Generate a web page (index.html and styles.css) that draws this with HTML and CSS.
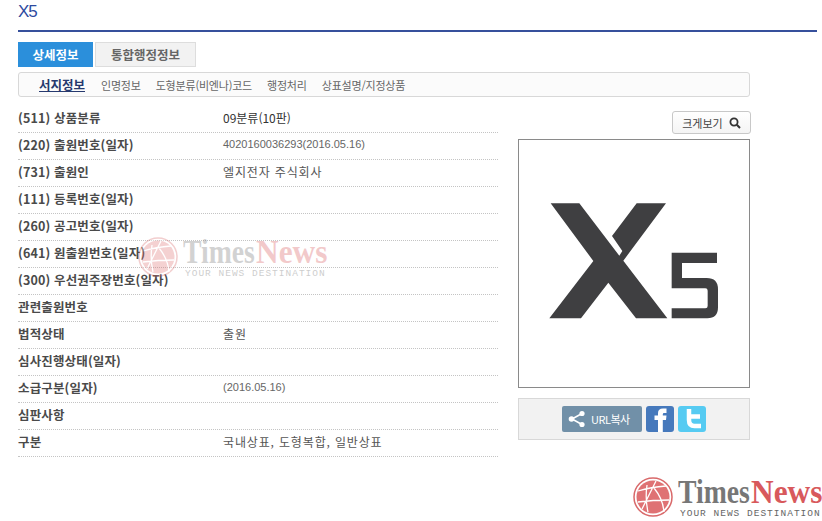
FILE: index.html
```html
<!DOCTYPE html>
<html lang="ko">
<head>
<meta charset="utf-8">
<title>X5</title>
<link rel="stylesheet" href="styles.css">
</head>
<body>
<main class="page">
  <h1 class="title">X5</h1>
  <div class="tabs">
    <a class="tab tab-active">상세정보</a>
    <a class="tab">통합행정정보</a>
  </div>
  <nav class="subnav">
    <a class="subnav-item subnav-active">서지정보</a>
    <a class="subnav-item">인명정보</a>
    <a class="subnav-item">도형분류(비엔나)코드</a>
    <a class="subnav-item">행정처리</a>
    <a class="subnav-item">상표설명/지정상품</a>
  </nav>
  <div class="content">
    <dl class="info">
      <div class="row"><dt>(511) 상품분류</dt><dd class="dark">09분류(10판)</dd></div>
      <div class="row"><dt>(220) 출원번호(일자)</dt><dd class="num">4020160036293(2016.05.16)</dd></div>
      <div class="row"><dt>(731) 출원인</dt><dd class="ko">엘지전자 주식회사</dd></div>
      <div class="row"><dt>(111) 등록번호(일자)</dt><dd></dd></div>
      <div class="row"><dt>(260) 공고번호(일자)</dt><dd></dd></div>
      <div class="row"><dt>(641) 원출원번호(일자)</dt><dd></dd></div>
      <div class="row"><dt>(300) 우선권주장번호(일자)</dt><dd></dd></div>
      <div class="row"><dt>관련출원번호</dt><dd></dd></div>
      <div class="row"><dt>법적상태</dt><dd class="ko">출원</dd></div>
      <div class="row"><dt>심사진행상태(일자)</dt><dd></dd></div>
      <div class="row"><dt>소급구분(일자)</dt><dd class="num">(2016.05.16)</dd></div>
      <div class="row"><dt>심판사항</dt><dd></dd></div>
      <div class="row"><dt>구분</dt><dd class="ko">국내상표, 도형복합, 일반상표</dd></div>
    </dl>
    <aside class="side">
      <a class="zoom-btn">크게보기
        <svg class="zoom-icon" viewBox="0 0 12 12" width="12" height="12" aria-hidden="true"><circle cx="5" cy="5" r="3.6" fill="none" stroke="#333" stroke-width="1.8"/><path d="M7.8 7.8 11 11" stroke="#333" stroke-width="2"/></svg>
      </a>
      <div class="mark">
        <svg class="mark-img" viewBox="27 -150 690 741" aria-label="X5 로고">
          <path fill="#3f3f41" d="M122 40H208L328 197 337 183 306 138 380 40H468L340 212 472 385H378L295 278 213 385H118L250 213Z"/>
          <path fill="#3f3f41" d="M485 188H621V219H516V264H590Q624 264 624 298V352Q624 385 592 385H485V355H586Q593 355 593 348V302Q593 295 586 295H485Z"/>
        </svg>
      </div>
      <div class="share">
        <a class="url-btn">
          <svg viewBox="0 0 18 18" width="18" height="18" aria-hidden="true"><path d="M14 3.5 4 9l10 5.500" fill="none" stroke="#fff" stroke-width="1.600"/><circle cx="14" cy="3.500" r="2.600" fill="#fff"/><circle cx="3.500" cy="9" r="2.800" fill="#fff"/><circle cx="14" cy="14.500" r="2.600" fill="#fff"/></svg>
          URL복사
        </a>
        <a class="social social-fb"><svg viewBox="0 0 28 26" width="28" height="26" aria-hidden="true"><path fill="#fff" d="M12 26V14H8.500V9.500H12V7Q12 2.500 17 2.500H20.500V7H18Q16.800 7 16.800 8.200V9.500H20.500L20 14H16.800V26Z"/></svg></a>
        <a class="social social-tw"><svg viewBox="0 0 28 26" width="28" height="26" aria-hidden="true"><path fill="none" stroke="#fff" stroke-width="4.500" d="M11 3V14Q11 20 16.500 20H23M11 10.500H22"/></svg></a>
      </div>
    </aside>
  </div>
</main>

<div class="stamp stamp-faint" aria-hidden="true">
  <svg class="globe" viewBox="0 0 40 40"><circle cx="20" cy="20" r="19" fill="#fff" stroke="#d9696a" stroke-width="1.500"/><circle cx="20" cy="20" r="16.500" fill="#df7274"/><path d="M5 14Q18 10 33 9M9 32Q16 18 23 4M21 11Q30 22 31 35M5 25Q20 23 36 23M15 35Q12 22 14 8" fill="none" stroke="#fff" stroke-width="1.300"/></svg>
  <div class="stamp-text"><div class="stamp-name"><span class="stamp-times">Times</span><span class="stamp-news">News</span></div><div class="stamp-tag">YOUR NEWS DESTINATION</div></div>
</div>
<div class="stamp stamp-corner">
  <svg class="globe" viewBox="0 0 40 40" aria-hidden="true"><circle cx="20" cy="20" r="19" fill="#fff" stroke="#d9696a" stroke-width="1.500"/><circle cx="20" cy="20" r="16.500" fill="#df7274"/><path d="M5 14Q18 10 33 9M9 32Q16 18 23 4M21 11Q30 22 31 35M5 25Q20 23 36 23M15 35Q12 22 14 8" fill="none" stroke="#fff" stroke-width="1.300"/></svg>
  <div class="stamp-text"><div class="stamp-name"><span class="stamp-times">Times</span><span class="stamp-news">News</span></div><div class="stamp-tag">YOUR NEWS DESTINATION</div></div>
</div>
</body>
</html>
```
FILE: styles.css
```css
* { box-sizing: border-box; }
html, body { margin: 0; height: 100%; overflow: hidden; background: #fff; }
body {
  position: relative;
  font-family: "Noto Sans CJK KR", "Noto Sans", sans-serif;
  font-size: 12px;
  color: #444;
}
.page { padding: 0 5px 0 18px; }
.title {
  margin: 0;
  height: 32px;
  border-bottom: 2px solid #36509c;
  font: 400 17px/24px "Liberation Sans", sans-serif;
  letter-spacing: -1px;
  color: #2d4a9f;
}
.tabs { display: flex; gap: 2px; margin-top: 10px; }
.tab {
  height: 25px;
  line-height: 23px;
  text-align: center;
  font-size: 12.5px;
  font-weight: 700;
  color: #666;
  width: 101px;
  background: #f2f2f2;
  border: 1px solid #ddd;
}
.tab-active { width: 75px; background: #2b8fdb; border-color: #2b8fdb; color: #fff; }
.subnav {
  display: flex;
  align-items: center;
  gap: 15px;
  width: 732px;
  height: 25px;
  margin-top: 5px;
  padding-left: 20px;
  background: #fbfbfb;
  border: 1px solid #d8d8d8;
  border-radius: 3px;
  font-size: 11px;
  letter-spacing: -0.2px;
  color: #666;
}
.subnav-active { margin-right: 1px; font-size: 12.5px; font-weight: 700; letter-spacing: 0; color: #26396e; text-decoration: underline; }
.content { display: grid; grid-template-columns: 480px 232px; column-gap: 20px; margin-top: 9px; }
.info { margin: 0; }
.row {
  display: grid;
  grid-template-columns: 205px 1fr;
  align-items: center;
  height: 27px;
  padding-bottom: 4px;
  border-bottom: 1px dotted #c4c4c4;
}
.row dt { font-size: 12.5px; font-weight: 700; letter-spacing: 0.15px; color: #4a4a4a; }
.row dd { margin: 0; font-size: 12px; color: #555; }
.row dd.dark { color: #333; }
.row dd.ko { letter-spacing: 0.85px; }
.row dd.num { font: 400 11px "Liberation Sans", sans-serif; color: #666; }
.side { display: flex; flex-direction: column; padding-top: 5px; }
.zoom-btn {
  display: flex;
  align-items: center;
  justify-content: center;
  gap: 6px;
  align-self: flex-end;
  width: 79px;
  height: 23px;
  margin-right: -1px;
  border: 1px solid #c8c8c8;
  border-radius: 3px;
  background: linear-gradient(#fff, #f4f4f4);
  font-size: 11px;
  color: #444;
}
.zoom-icon { display: block; }
.mark { height: 249px; margin-top: 5px; background: #fff; border: 1px solid #8a8a8a; }
.mark-img { display: block; width: 230px; height: 247px; }
.share {
  display: flex;
  justify-content: center;
  align-items: center;
  gap: 4px;
  height: 42px;
  margin-top: 10px;
  background: #f2f2f2;
  border: 1px solid #d8d8d8;
}
.url-btn {
  display: flex;
  align-items: center;
  gap: 5px;
  width: 80px;
  height: 26px;
  padding-left: 6px;
  border-radius: 2px;
  background: #7190a8;
  font-size: 11px;
  letter-spacing: -0.5px;
  color: #fff;
}
.url-btn svg { flex: none; }
.social { display: block; width: 28px; height: 26px; border-radius: 3px; overflow: hidden; }
.social svg { display: block; }
.social-fb { background: #4679bc; }
.social-tw { background: #56cbf2; }
.stamp { position: absolute; display: flex; align-items: flex-start; gap: 5px; width: 189px; }
.stamp-corner { left: 633px; top: 477px; }
.stamp-faint { left: 138px; top: 237px; opacity: 0.32; }
.globe { flex: none; width: 40px; height: 40px; }
.stamp-text { white-space: nowrap; }
.stamp-name { display: flex; height: 30px; font: 700 33px/30px "Liberation Serif", serif; }
.stamp-times, .stamp-news { display: block; transform-origin: left center; }
.stamp-times { width: 73px; color: #777; transform: scaleX(0.84); }
.stamp-news { width: 70px; color: #d8595c; transform: scaleX(0.95); }
.stamp-tag { margin: 2px 0 0 2px; font: 400 9.500px/10px "Liberation Mono", monospace; letter-spacing: 1px; color: #666; }
```
